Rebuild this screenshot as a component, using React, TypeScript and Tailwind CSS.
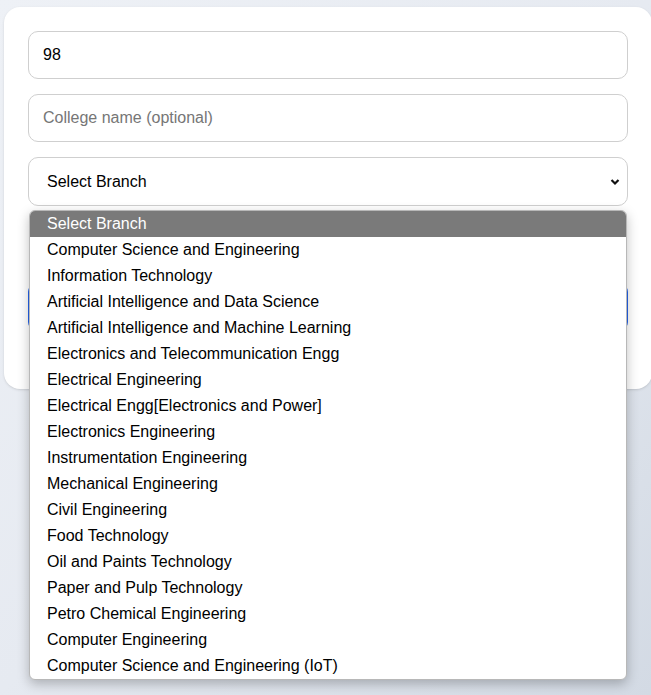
import { useState } from 'react';

const branches = [
  'Computer Science and Engineering',
  'Information Technology',
  'Artificial Intelligence and Data Science',
  'Artificial Intelligence and Machine Learning',
  'Electronics and Telecommunication Engg',
  'Electrical Engineering',
  'Electrical Engg[Electronics and Power]',
  'Electronics Engineering',
  'Instrumentation Engineering',
  'Mechanical Engineering',
  'Civil Engineering',
  'Food Technology',
  'Oil and Paints Technology',
  'Paper and Pulp Technology',
  'Petro Chemical Engineering',
  'Computer Engineering',
  'Computer Science and Engineering (IoT)',
];

export default function App() {
  const [percentile, setPercentile] = useState('98');
  const [college, setCollege] = useState('');

  return (
    <div
      className="min-h-screen w-full bg-gradient-to-br from-[#eef1f6] via-[#e6eaf1] to-[#d3dae4] pl-[4px] pt-[7px]"
      style={{ fontFamily: '"Liberation Sans", Arial, sans-serif' }}
    >
      {/* 카드 */}
      <div className="relative w-[648px] bg-white rounded-[16px] px-6 pt-6 pb-[59px] flex flex-col gap-[15px] shadow-sm">
        <input
          value={percentile}
          onChange={(e) => setPercentile(e.target.value)}
          className="h-[48px] w-full rounded-[10px] border border-[#cfcfcf] px-[14px] text-[16px] text-black outline-none"
        />
        <input
          value={college}
          onChange={(e) => setCollege(e.target.value)}
          placeholder="College name (optional)"
          className="h-[48px] w-full rounded-[10px] border border-[#cfcfcf] px-[14px] text-[16px] text-black placeholder:text-[#767676] outline-none"
        />
        <div className="h-[49px] w-full rounded-[10px] border border-[#cfcfcf] pl-[18px] pr-[7px] flex items-center justify-between text-[16px] text-black">
          <span>Select Branch</span>
          <svg width="10" height="8" viewBox="0 0 10 8">
            <path d="M1.5 2 L5 5.5 L8.5 2" fill="none" stroke="#111" strokeWidth="2.2" />
          </svg>
        </div>
        <div className="h-[48px] w-full" />
        <div className="h-[46px] w-full rounded-[8px] bg-[#2563eb]" />

        {/* 드롭다운 목록 */}
        <div className="absolute left-[25px] top-[203px] w-[598px] bg-white rounded-[6px] border border-[#b8b8b8] shadow-[0_4px_12px_rgba(0,0,0,0.25)] overflow-hidden z-10">
          <div className="h-[26px] bg-[#7a7a7a] text-white text-[16px] leading-[26px] pl-[17px]">
            Select Branch
          </div>
          {branches.map((b) => (
            <div key={b} className="h-[26px] text-black text-[16px] leading-[26px] pl-[17px]">
              {b}
            </div>
          ))}
        </div>
      </div>
    </div>
  );
}
